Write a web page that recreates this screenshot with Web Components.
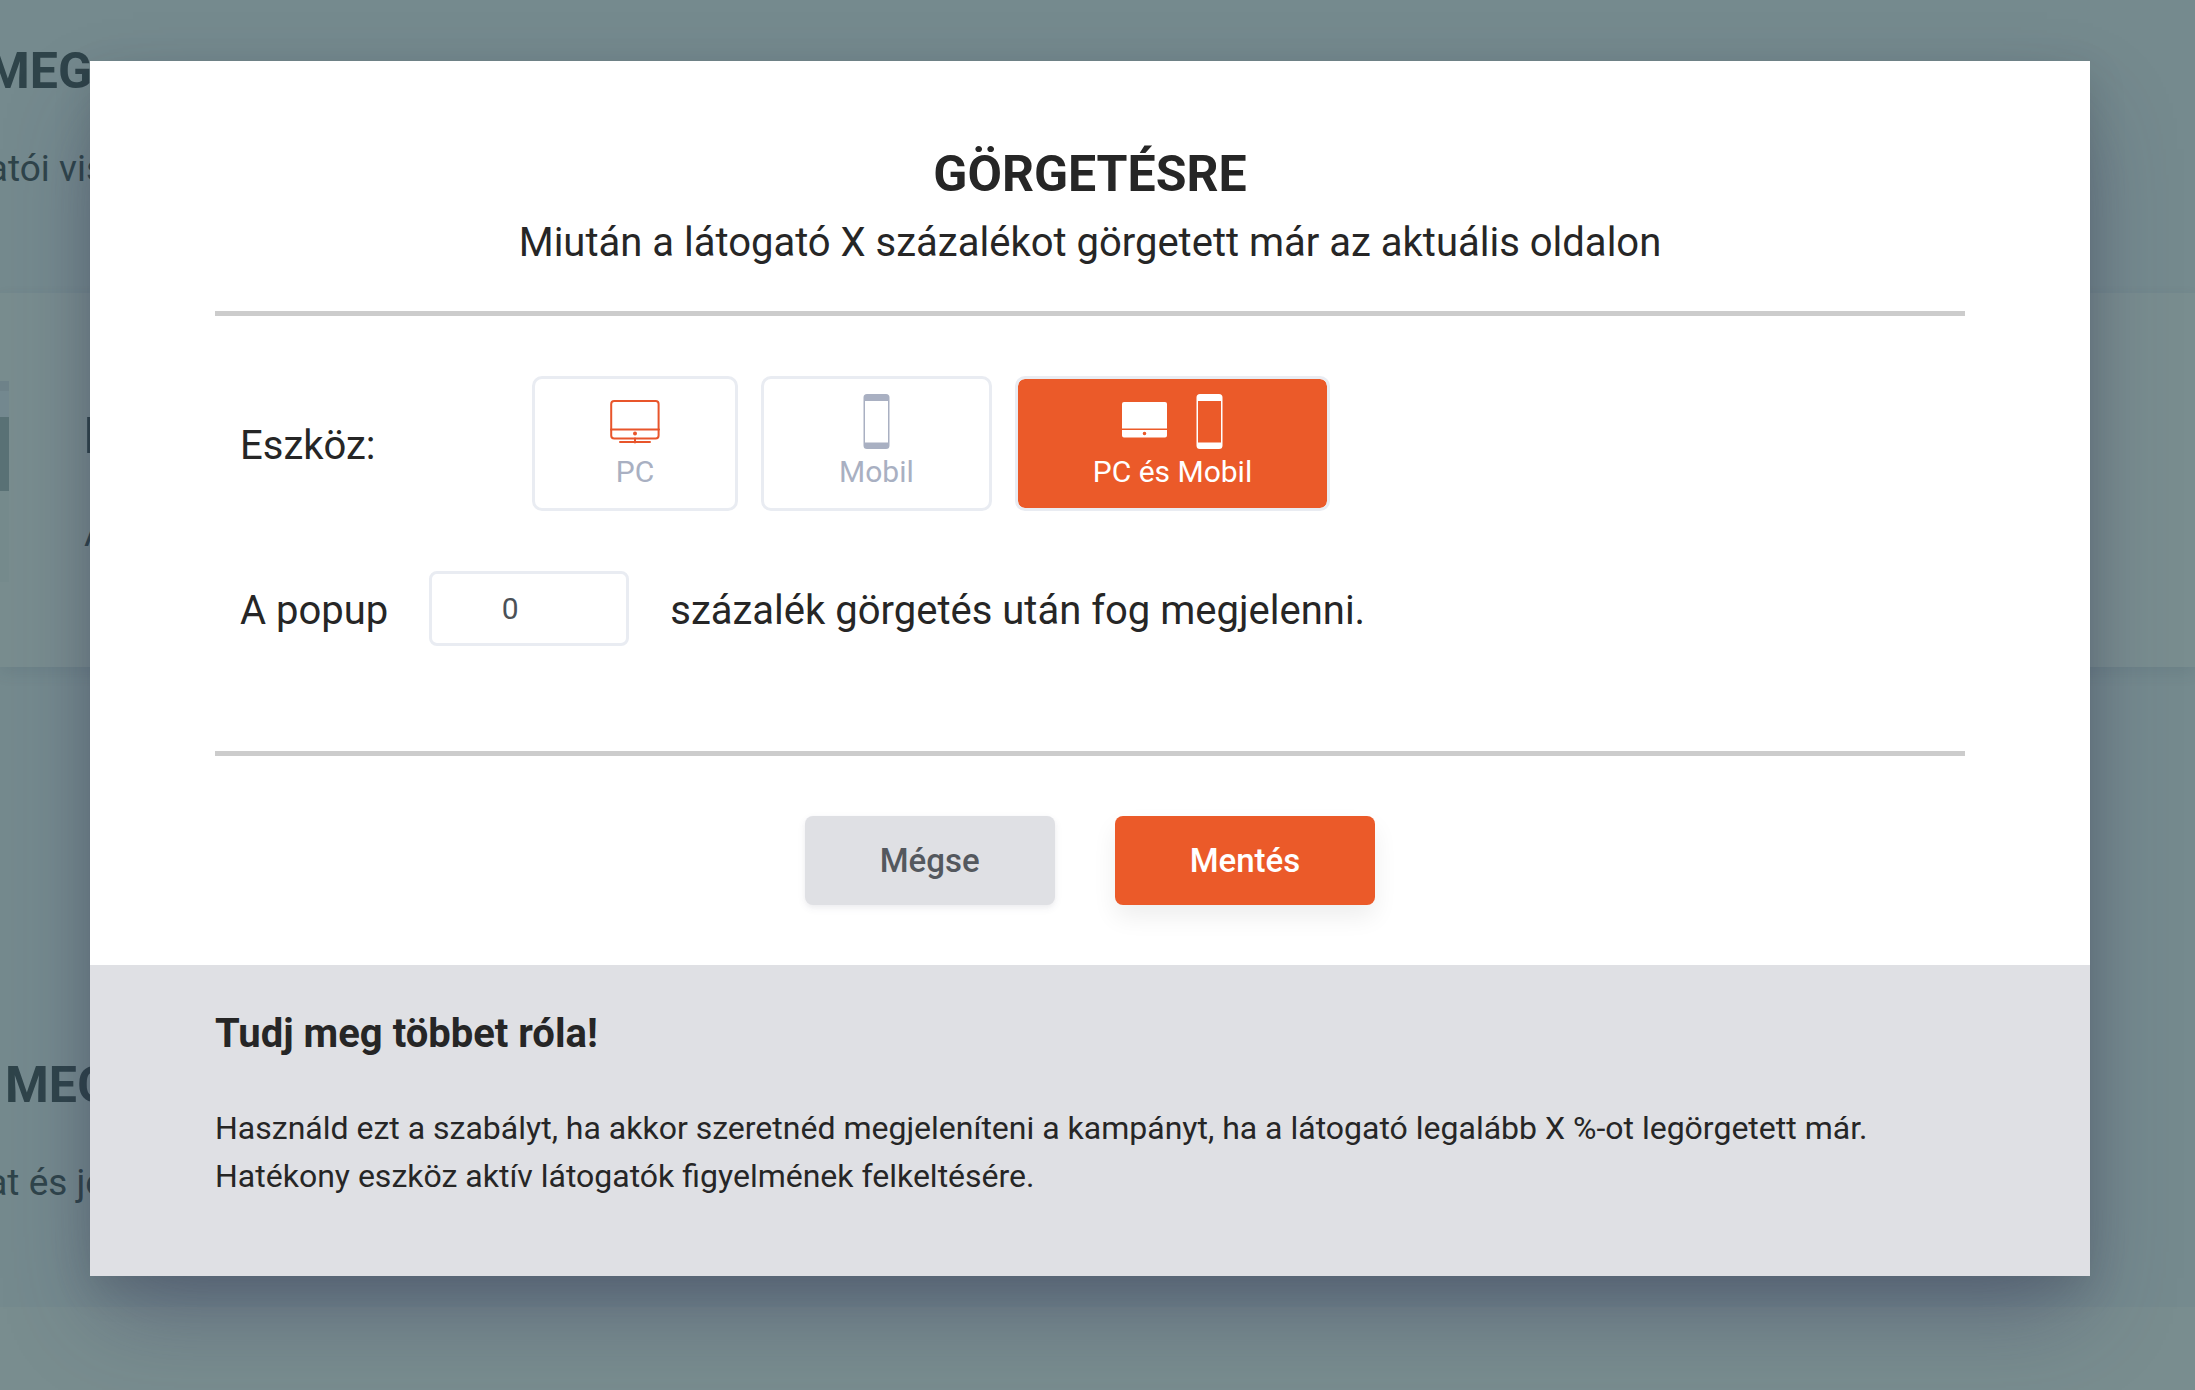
<!DOCTYPE html>
<html lang="hu">
<head>
<meta charset="utf-8">
<meta name="viewport" content="width=device-width, initial-scale=1">
<title>Görgetésre</title>
<style>
  html, body { margin: 0; height: 100%; }
  body { font-family: Roboto, "Liberation Sans", sans-serif; color: #262626; overflow: hidden; background: #788c8e; }
</style>
</head>
<body>
<rule-page></rule-page>

<template id="t-page">
  <style>
    :host { display: block; position: relative; min-height: 100vh; overflow: hidden; }
    .overlay { position: absolute; inset: 0; padding: 61px 105px 0 90px; }
  </style>
  <page-backdrop></page-backdrop>
  <div class="overlay">
    <rule-dialog>
      <span slot="title">GÖRGETÉSRE</span>
      <span slot="subtitle">Miután a látogató X százalékot görgetett már az aktuális oldalon</span>
      <rule-form></rule-form>
      <action-button slot="actions" variant="plain">Mégse</action-button>
      <action-button slot="actions" variant="primary">Mentés</action-button>
      <info-panel slot="info">
        <span slot="title">Tudj meg többet róla!</span>
        Használd ezt a szabályt, ha akkor szeretnéd megjeleníteni a kampányt, ha a látogató legalább X %-ot legörgetett már. Hatékony eszköz aktív látogatók figyelmének felkeltésére.
      </info-panel>
    </rule-dialog>
  </div>
</template>

<template id="t-backdrop">
  <style>
    :host { display: block; color: #2f444a; background: #758a8e; }
    .band { box-sizing: border-box; display: flex; flex-direction: column; width: 100%; }
    .clip { display: flex; justify-content: flex-end; width: 92px; white-space: nowrap; }
    .near { width: 105px; }
    .wide { width: 111px; }
    h2 { margin: 0; font-size: 50px; line-height: 60px; font-weight: 700; }
    p { margin: 0; font-size: 37px; line-height: 50px; }
    .first { height: 293px; padding-top: 41px; gap: 43px; }
    .card { flex-direction: row; height: 374px; padding-top: 88px; gap: 75px; background: #798d8f;
      box-shadow: 0 6px 14px rgba(50, 70, 93, .12); }
    .thumb { width: 9px; height: 201px; background: linear-gradient(#6f838a 0 10px, #748990 10px 36px, #5a7276 36px 110px, #768b8d 110px); }
    .text { display: flex; flex-direction: column; gap: 43px; padding-top: 25px; }
    .second { height: 640px; padding-top: 388px; gap: 43px; }
    .last { height: 83px; background: #798d8f; }
  </style>
  <div class="band first">
    <div class="clip"><h2>MEG</h2></div>
    <div class="clip near"><p>atói vis</p></div>
  </div>
  <div class="band card">
    <div class="thumb"></div>
    <div class="text"><h2>E</h2><p>A</p></div>
  </div>
  <div class="band second">
    <div class="clip wide"><h2>MEG</h2></div>
    <div class="clip near"><p>at és je</p></div>
  </div>
  <div class="band last"></div>
</template>

<template id="t-dialog">
  <style>
    :host { display: block; background: #fff;
      box-shadow: 0 45px 87px -12px rgba(50, 50, 93, .4), 0 12px 37px rgba(0, 0, 0, .12); }
    .main { padding: 60px 125px; }
    header { text-align: center; padding-bottom: 38px; border-bottom: 5px solid #ccc; }
    h1 { margin: 0; font-size: 50px; line-height: 60px; font-weight: 700; padding-top: 23px; }
    header p { margin: 0; font-size: 40px; line-height: 60px; padding-top: 9px; }
    .actions { display: flex; justify-content: center; gap: 60px; padding-top: 60px; border-top: 5px solid #ccc; }
  </style>
  <section role="dialog" aria-labelledby="title">
    <div class="main">
      <header>
        <h1 id="title"><slot name="title"></slot></h1>
        <p><slot name="subtitle"></slot></p>
      </header>
      <slot></slot>
      <div class="actions"><slot name="actions"></slot></div>
    </div>
    <slot name="info"></slot>
  </section>
</template>

<template id="t-form">
  <style>
    :host { display: block; padding: 60px 25px 105px; font-size: 40px; line-height: 60px; }
    .row { display: flex; align-items: center; }
    .devices { display: flex; gap: 23px; }
    .label { box-sizing: border-box; width: 292px; }
    .label, label { padding-top: 4px; }
    .delay { padding-top: 60px; gap: 41px; }
    input { box-sizing: border-box; width: 200px; height: 75px; margin: 0; padding: 0 38px 0 0; border: 3px solid #e9ecf2; border-radius: 8px;
      background: #fff; color: #4b5157; font: 400 30px/45px Roboto, "Liberation Sans", sans-serif; text-align: center; outline: 0; }
  </style>
  <div class="row">
    <span class="label" id="device">Eszköz:</span>
    <div class="devices" role="group" aria-labelledby="device">
      <device-option icons="pc">PC</device-option>
      <device-option icons="phone">Mobil</device-option>
      <device-option icons="pc phone" selected>PC és Mobil</device-option>
    </div>
  </div>
  <div class="row delay">
    <label for="percent">A popup</label>
    <input id="percent" type="text" inputmode="numeric" value="0">
    <label for="percent">százalék görgetés után fog megjelenni.</label>
  </div>
</template>

<template id="t-device">
  <style>
    :host { display: block; }
    button { box-sizing: border-box; display: flex; flex-direction: column; align-items: center; margin: 0; padding: 15px 75px 14px;
      border: 3px solid #e9ecf2; border-radius: 10px; background: #fff; background-clip: padding-box; color: #a9b0c2;
      font: 400 30px/45px Roboto, "Liberation Sans", sans-serif; cursor: pointer; }
    .icons { display: flex; gap: 25px; height: 55px; }
    svg { display: block; height: 55px; }
    .pc { width: 50px; color: #e8552b; }
    .phone { width: 27px; }
    :host([selected]) button { background-color: #eb5a29; color: #fff; }
    .solid { display: none; }
    :host([selected]) .solid { display: block; fill: #fff; }
    :host([selected]) .line { display: none; }
  </style>
  <button type="button"><span class="icons"></span><span><slot></slot></span></button>
</template>

<template id="t-button">
  <style>
    :host { display: block; }
    button { display: block; margin: 0; padding: 0 75px; border: 0; border-radius: 8px; cursor: pointer;
      font: 500 33px/89px Roboto, "Liberation Sans", sans-serif; }
    .plain { background: #dfe0e4; color: #54585e; box-shadow: 0 3px 8px rgba(50, 50, 93, .07), 0 2px 5px rgba(0, 0, 0, .03); }
    .primary { background: #eb5a29; color: #fff; box-shadow: 0 12px 25px rgba(0, 0, 0, .07); }
  </style>
  <button type="button"><slot></slot></button>
</template>

<template id="t-info">
  <style>
    :host { display: block; padding: 39px 125px 76px; background: #dfe0e4; }
    h2 { margin: 0; font-size: 40px; line-height: 60px; font-weight: 700; }
    p { margin: 0; padding-top: 40px; font-size: 32px; line-height: 48px; }
  </style>
  <h2><slot name="title"></slot></h2>
  <p><slot></slot></p>
</template>

<script>
  class TemplateElement extends HTMLElement {
    constructor() {
      super();
      this.attachShadow({ mode: "open" });
      this.shadowRoot.append(document.getElementById(this.constructor.template).content.cloneNode(true));
    }
  }

  const ICONS = {
    pc: `<svg class="pc" viewBox="0 0 50 55" aria-hidden="true">
      <g class="line" fill="none" stroke="currentColor" stroke-width="2">
        <rect x="1.2" y="7" width="47.4" height="37.4" rx="3"/>
        <path d="M1 35.500h48M25 44.500v4M10 48h30" stroke-linecap="round"/>
        <circle cx="25" cy="39.500" r="2" fill="currentColor" stroke="none"/>
      </g>
      <g class="solid">
        <path d="M4 8h40a2 2 0 0 1 2 2v24.500H1V10a2 2 0 0 1 2-2z"/>
        <path fill-rule="evenodd" d="M1 36h45v5.500a2 2 0 0 1-2 2H3a2 2 0 0 1-2-2zM23.500 37.700a1.800 1.800 0 1 0 0 3.600a1.800 1.800 0 1 0 0-3.600z"/>
      </g></svg>`,
    phone: `<svg class="phone" viewBox="0 0 27 55" aria-hidden="true">
      <path fill="currentColor" fill-rule="evenodd" d="M4 0h19a3.500 3.500 0 0 1 3.500 3.500v48A3.500 3.500 0 0 1 23 55H4a3.500 3.500 0 0 1-3.500-3.500v-48A3.500 3.500 0 0 1 4 0zM2 7v41.500h23V7z"/></svg>`
  };

  customElements.define("page-backdrop", class extends TemplateElement { static template = "t-backdrop"; });
  customElements.define("info-panel", class extends TemplateElement { static template = "t-info"; });
  customElements.define("action-button", class extends TemplateElement {
    static template = "t-button";
    connectedCallback() {
      this.shadowRoot.querySelector("button").className = this.getAttribute("variant");
    }
  });
  customElements.define("device-option", class extends TemplateElement {
    static template = "t-device";
    connectedCallback() {
      this.shadowRoot.querySelector(".icons").innerHTML = this.getAttribute("icons").split(" ").map(n => ICONS[n]).join("");
      this.shadowRoot.querySelector("button").setAttribute("aria-pressed", this.hasAttribute("selected"));
    }
  });
  customElements.define("rule-form", class extends TemplateElement { static template = "t-form"; });
  customElements.define("rule-dialog", class extends TemplateElement { static template = "t-dialog"; });
  customElements.define("rule-page", class extends TemplateElement { static template = "t-page"; });
</script>
</body>
</html>
